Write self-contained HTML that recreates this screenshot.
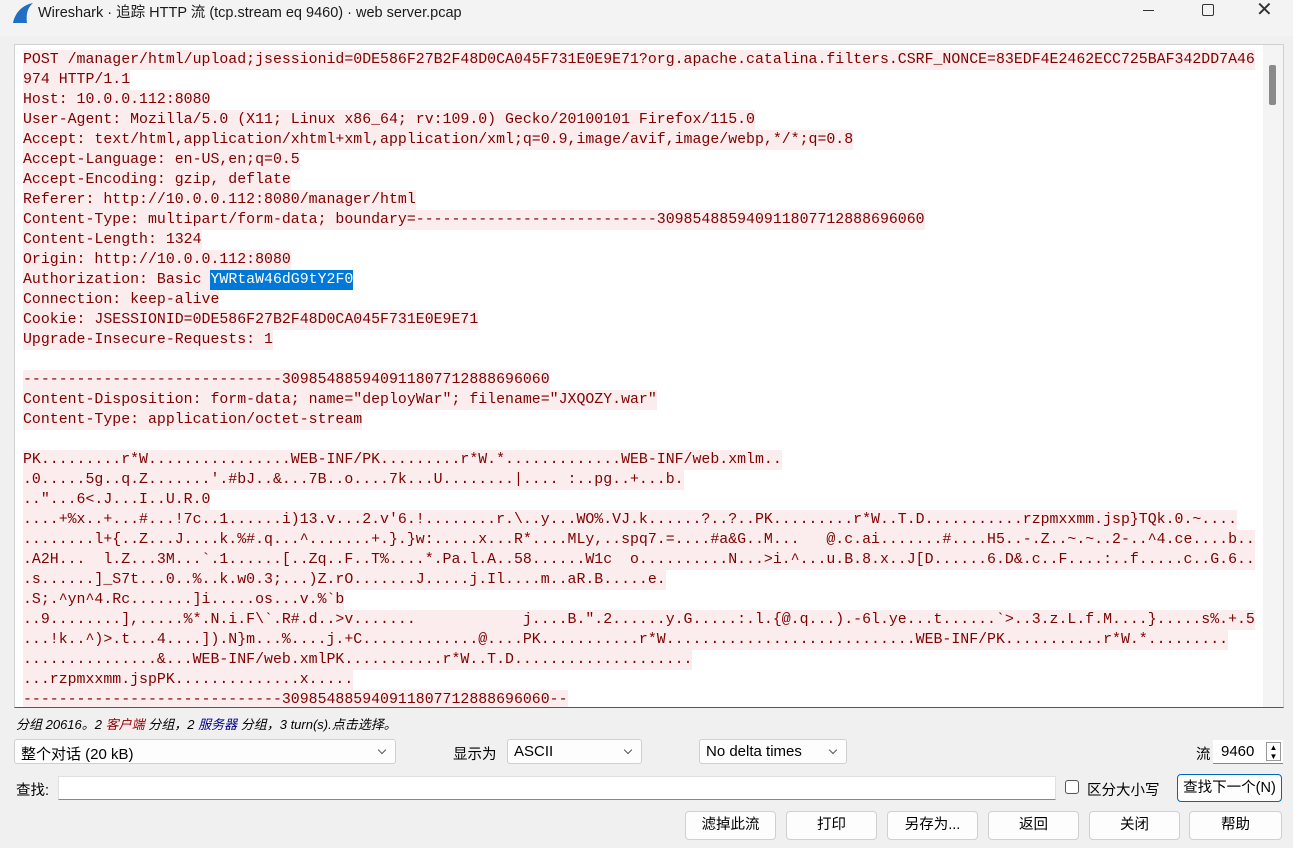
<!DOCTYPE html>
<html><head><meta charset="utf-8"><style>
*{margin:0;padding:0;box-sizing:border-box}
body{width:1293px;height:848px;background:#f0f0f0;font-family:"Liberation Sans","Noto Sans CJK SC",sans-serif;position:relative;overflow:hidden;color:#000}
.title{position:absolute;left:0;top:0;width:1293px;height:36px;background:#f3f3f3}
.title .t{position:absolute;left:38px;top:1px;font-size:14.5px;color:#1a1a1a}
.ta{position:absolute;left:14px;top:44px;width:1270px;height:664px;background:#fff;border:1px solid #d0d0d0;border-bottom:1px solid #2a5fa8;overflow:hidden}
.txt{position:absolute;left:8px;top:5px;font-family:"Liberation Mono",monospace;font-size:14.88px;line-height:20px;color:#7f0000}
.txt div{height:20px;white-space:nowrap}
.txt span{background:#fbeded;display:inline-block;height:20px;white-space:pre;vertical-align:top}
.txt span.sel{background:#0078d7;color:#fff}
.sb{position:absolute;right:0;top:0;width:20px;height:662px;background:#f4f4f4}
.thumb{position:absolute;left:6px;top:20px;width:7px;height:40px;background:#8a8a8a;border-radius:2px}
.lab{position:absolute;font-size:14.5px}
.combo{position:absolute;background:#fdfdfd;border:1px solid #d0d0d0;border-radius:3px;height:25px;font-size:15px;padding:3px 6px}
.combo:after{content:"";position:absolute;right:10px;top:7px;width:5px;height:5px;border-right:1px solid #555;border-bottom:1px solid #555;transform:rotate(45deg)}
.btn{position:absolute;top:811px;height:29px;width:91px;background:#fdfdfd;border:1px solid #d0d0d0;border-radius:4px;font-size:14.5px;text-align:center;line-height:27px}
</style></head><body>
<div class="title">
<svg style="position:absolute;left:12px;top:2px" width="22" height="22" viewBox="0 0 22 22"><path d="M1 21 C3 11 10 3 21 1 C15 6 14 13 15 21 Z" fill="#1f6fc5"/></svg>
<div class="t">Wireshark · 追踪 HTTP 流 (tcp.stream eq 9460) · web server.pcap</div>
<div style="position:absolute;left:1143px;top:10px;width:11px;height:1px;background:#333"></div>
<div style="position:absolute;left:1202px;top:4px;width:12px;height:12px;border:1.3px solid #333;border-radius:2px"></div>
<div style="position:absolute;left:1256px;top:-3px;font-size:20px;color:#333">✕</div>
</div>
<div class="ta">
<div class="txt"><div><span>POST /manager/html/upload;jsessionid=0DE586F27B2F48D0CA045F731E0E9E71?org.apache.catalina.filters.CSRF_NONCE=83EDF4E2462ECC725BAF342DD7A46</span></div>
<div><span>974 HTTP/1.1</span></div>
<div><span>Host: 10.0.0.112:8080</span></div>
<div><span>User-Agent: Mozilla/5.0 (X11; Linux x86_64; rv:109.0) Gecko/20100101 Firefox/115.0</span></div>
<div><span>Accept: text/html,application/xhtml+xml,application/xml;q=0.9,image/avif,image/webp,*/*;q=0.8</span></div>
<div><span>Accept-Language: en-US,en;q=0.5</span></div>
<div><span>Accept-Encoding: gzip, deflate</span></div>
<div><span>Referer: http://10.0.0.112:8080/manager/html</span></div>
<div><span>Content-Type: multipart/form-data; boundary=---------------------------309854885940911807712888696060</span></div>
<div><span>Content-Length: 1324</span></div>
<div><span>Origin: http://10.0.0.112:8080</span></div>
<div><span>Authorization: Basic </span><span class="sel">YWRtaW46dG9tY2F0</span></div>
<div><span>Connection: keep-alive</span></div>
<div><span>Cookie: JSESSIONID=0DE586F27B2F48D0CA045F731E0E9E71</span></div>
<div><span>Upgrade-Insecure-Requests: 1</span></div>
<div></div>
<div><span>-----------------------------309854885940911807712888696060</span></div>
<div><span>Content-Disposition: form-data; name="deployWar"; filename="JXQOZY.war"</span></div>
<div><span>Content-Type: application/octet-stream</span></div>
<div></div>
<div><span>PK.........r*W................WEB-INF/PK.........r*W.*.............WEB-INF/web.xmlm..</span></div>
<div><span>.0.....5g..q.Z.......'.#bJ..&amp;...7B..o....7k...U........|.... :..pg..+...b.</span></div>
<div><span>.."...6&lt;.J...I..U.R.0</span></div>
<div><span>....+%x..+...#...!7c..1......i)13.v...2.v'6.!........r.\..y...WO%.VJ.k......?..?..PK.........r*W..T.D...........rzpmxxmm.jsp}TQk.0.~....</span></div>
<div><span>........l+{..Z...J....k.%#.q...^.......+.}.}w:.....x...R*....MLy,..spq7.=....#a&amp;G..M...   @.c.ai.......#....H5..-.Z..~.~..2-..^4.ce....b..</span></div>
<div><span>.A2H...  l.Z...3M...`.1......[..Zq..F..T%....*.Pa.l.A..58......W1c  o..........N...&gt;i.^...u.B.8.x..J[D......6.D&amp;.c..F....:..f.....c..G.6..</span></div>
<div><span>.s......]_S7t...0..%..k.w0.3;...)Z.rO.......J.....j.Il....m..aR.B.....e.</span></div>
<div><span>.S;.^yn^4.Rc.......]i.....os...v.%`b</span></div>
<div><span>..9........],.....%*.N.i.F\`.R#.d..&gt;v.......            j....B.".2......y.G.....:.l.{@.q...).-6l.ye...t......`&gt;..3.z.L.f.M....}.....s%.+.5</span></div>
<div><span>...!k..^)&gt;.t...4....]).N}m...%....j.+C.............@....PK...........r*W............................WEB-INF/PK...........r*W.*.........</span></div>
<div><span>...............&amp;...WEB-INF/web.xmlPK...........r*W..T.D....................</span></div>
<div><span>...rzpmxxmm.jspPK..............x.....</span></div>
<div><span>-----------------------------309854885940911807712888696060--</span></div></div>
<div class="sb"><div class="thumb"></div></div>
</div>
<div class="lab" style="left:16px;top:714px;font-size:13px;font-style:italic">分组 20616。2 <span style="color:#8b0000;background:#fbeded">客户端</span> 分组，2 <span style="color:#00008b">服务器</span> 分组，3 turn(s).点击选择。</div>
<div class="combo" style="left:14px;top:739px;width:382px">整个对话 (20 kB)</div>
<div class="lab" style="left:453px;top:743px">显示为</div>
<div class="combo" style="left:507px;top:739px;width:135px">ASCII</div>
<div class="combo" style="left:699px;top:739px;width:148px">No delta times</div>
<div class="lab" style="left:1196px;top:743px">流</div>
<div style="position:absolute;left:1213px;top:740px;width:70px;height:24px;background:#fff;border-bottom:1px solid #888;font-size:15px;padding:3px 8px">9460<span style="position:absolute;right:2px;top:2px;width:15px;height:19px;border:1px solid #999;font-size:8px;line-height:9px;text-align:center">▲<br>▼</span></div>
<div class="lab" style="left:16px;top:779px">查找:</div>
<div style="position:absolute;left:58px;top:776px;width:998px;height:24px;background:#fff;border:1px solid #e0e0e0;border-bottom:1px solid #888"></div>
<div style="position:absolute;left:1065px;top:780px;width:14px;height:14px;border:1px solid #555;border-radius:3px;background:#fff"></div>
<div class="lab" style="left:1087px;top:779px">区分大小写</div>
<div style="position:absolute;left:1177px;top:774px;width:105px;height:28px;background:#fdfdfd;border:1px solid #0067c0;border-radius:4px;font-size:14.5px;text-align:center;line-height:26px">查找下一个(N)</div>
<div class="btn" style="left:685px">滤掉此流</div>
<div class="btn" style="left:786px">打印</div>
<div class="btn" style="left:887px">另存为...</div>
<div class="btn" style="left:988px">返回</div>
<div class="btn" style="left:1089px">关闭</div>
<div class="btn" style="left:1189px;width:93px">帮助</div>
</body></html>
